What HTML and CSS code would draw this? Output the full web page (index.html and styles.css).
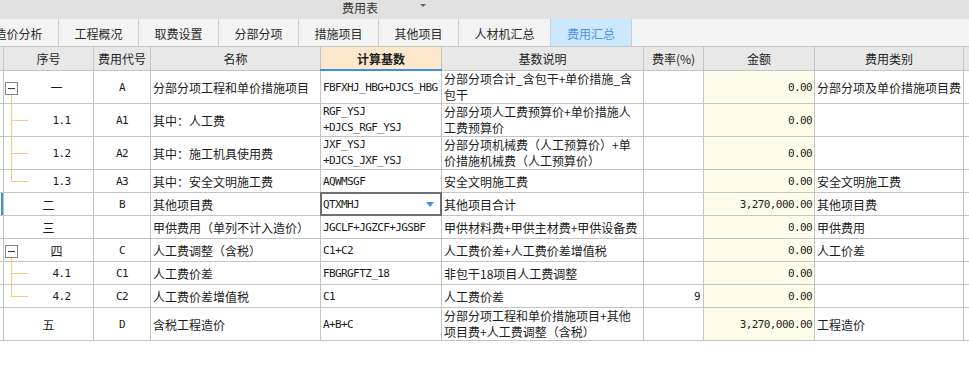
FILE: index.html
```html
<!DOCTYPE html>
<html lang="zh-CN">
<head>
<meta charset="utf-8">
<title>费用表</title>
<link rel="stylesheet" href="styles.css">
</head>
<body>
<div class="titlebar"><span class="title">费用表</span><span class="caret"></span></div>
<div class="tabs">
  <div class="tab first">造价分析</div>
  <div class="tab">工程概况</div>
  <div class="tab">取费设置</div>
  <div class="tab">分部分项</div>
  <div class="tab">措施项目</div>
  <div class="tab">其他项目</div>
  <div class="tab wide">人材机汇总</div>
  <div class="tab active">费用汇总</div>
</div>
<div class="grid">
  <div class="row head">
    <div class="c c0"></div>
    <div class="c c1">序号</div>
    <div class="c c2">费用代号</div>
    <div class="c c3">名称</div>
    <div class="c c4 hcalc">计算基数</div>
    <div class="c c5">基数说明</div>
    <div class="c c6">费率(%)</div>
    <div class="c c7">金额</div>
    <div class="c c8">费用类别</div>
    <div class="c c9"></div>
  </div>

  <div class="row h2">
    <div class="c c0"></div>
    <div class="c c1 t0"><span class="tree-box"></span><span class="vl root"></span>一</div>
    <div class="c c2 m">A</div>
    <div class="c c3">分部分项工程和单价措施项目</div>
    <div class="c c4 m">FBFXHJ_HBG+DJCS_HBG</div>
    <div class="c c5 two">分部分项合计_含包干+单价措施_含<br>包干</div>
    <div class="c c6 m"></div>
    <div class="c c7 m">0.00</div>
    <div class="c c8">分部分项及单价措施项目费</div>
    <div class="c c9"></div>
  </div>

  <div class="row h2">
    <div class="c c0"></div>
    <div class="c c1 t1 m"><span class="vl mid"></span><span class="hl"></span>1.1</div>
    <div class="c c2 m">A1</div>
    <div class="c c3">其中：人工费</div>
    <div class="c c4 m two">RGF_YSJ<br>+DJCS_RGF_YSJ</div>
    <div class="c c5 two">分部分项人工费预算价+单价措施人<br>工费预算价</div>
    <div class="c c6 m"></div>
    <div class="c c7 m">0.00</div>
    <div class="c c8"></div>
    <div class="c c9"></div>
  </div>

  <div class="row h2">
    <div class="c c0"></div>
    <div class="c c1 t1 m"><span class="vl mid"></span><span class="hl"></span>1.2</div>
    <div class="c c2 m">A2</div>
    <div class="c c3">其中：施工机具使用费</div>
    <div class="c c4 m two">JXF_YSJ<br>+DJCS_JXF_YSJ</div>
    <div class="c c5 two">分部分项机械费（人工预算价）+单<br>价措施机械费（人工预算价）</div>
    <div class="c c6 m"></div>
    <div class="c c7 m">0.00</div>
    <div class="c c8"></div>
    <div class="c c9"></div>
  </div>

  <div class="row h1">
    <div class="c c0"></div>
    <div class="c c1 t1 m"><span class="vl last"></span><span class="hl"></span>1.3</div>
    <div class="c c2 m">A3</div>
    <div class="c c3">其中：安全文明施工费</div>
    <div class="c c4 m">AQWMSGF</div>
    <div class="c c5">安全文明施工费</div>
    <div class="c c6 m"></div>
    <div class="c c7 m">0.00</div>
    <div class="c c8">安全文明施工费</div>
    <div class="c c9"></div>
  </div>

  <div class="row h1 current">
    <div class="c c0"></div>
    <div class="c c1">二</div>
    <div class="c c2 m">B</div>
    <div class="c c3">其他项目费</div>
    <div class="c c4 m sel">QTXMHJ<span class="dd"></span></div>
    <div class="c c5">其他项目合计</div>
    <div class="c c6 m"></div>
    <div class="c c7 m">3,270,000.00</div>
    <div class="c c8">其他项目费</div>
    <div class="c c9"></div>
  </div>

  <div class="row h1">
    <div class="c c0"></div>
    <div class="c c1">三</div>
    <div class="c c2 m"></div>
    <div class="c c3">甲供费用（单列不计入造价）</div>
    <div class="c c4 m">JGCLF+JGZCF+JGSBF</div>
    <div class="c c5">甲供材料费+甲供主材费+甲供设备费</div>
    <div class="c c6 m"></div>
    <div class="c c7 m">0.00</div>
    <div class="c c8">甲供费用</div>
    <div class="c c9"></div>
  </div>

  <div class="row h1">
    <div class="c c0"></div>
    <div class="c c1 t0"><span class="tree-box"></span><span class="vl root"></span>四</div>
    <div class="c c2 m">C</div>
    <div class="c c3">人工费调整（含税）</div>
    <div class="c c4 m">C1+C2</div>
    <div class="c c5">人工费价差+人工费价差增值税</div>
    <div class="c c6 m"></div>
    <div class="c c7 m">0.00</div>
    <div class="c c8">人工价差</div>
    <div class="c c9"></div>
  </div>

  <div class="row h1">
    <div class="c c0"></div>
    <div class="c c1 t1 m"><span class="vl mid"></span><span class="hl"></span>4.1</div>
    <div class="c c2 m">C1</div>
    <div class="c c3">人工费价差</div>
    <div class="c c4 m">FBGRGFTZ_18</div>
    <div class="c c5">非包干18项目人工费调整</div>
    <div class="c c6 m"></div>
    <div class="c c7 m">0.00</div>
    <div class="c c8"></div>
    <div class="c c9"></div>
  </div>

  <div class="row h1">
    <div class="c c0"></div>
    <div class="c c1 t1 m"><span class="vl last"></span><span class="hl"></span>4.2</div>
    <div class="c c2 m">C2</div>
    <div class="c c3">人工费价差增值税</div>
    <div class="c c4 m">C1</div>
    <div class="c c5">人工费价差</div>
    <div class="c c6 m">9</div>
    <div class="c c7 m">0.00</div>
    <div class="c c8"></div>
    <div class="c c9"></div>
  </div>

  <div class="row h2">
    <div class="c c0"></div>
    <div class="c c1">五</div>
    <div class="c c2 m">D</div>
    <div class="c c3">含税工程造价</div>
    <div class="c c4 m">A+B+C</div>
    <div class="c c5 two">分部分项工程和单价措施项目+其他<br>项目费+人工费调整（含税）</div>
    <div class="c c6 m"></div>
    <div class="c c7 m">3,270,000.00</div>
    <div class="c c8">工程造价</div>
    <div class="c c9"></div>
  </div>
</div>
</body>
</html>
```

FILE: styles.css
```css
* { box-sizing: border-box; margin: 0; padding: 0; }

body {
  margin: 0;
  width: 969px;
  height: 385px;
  overflow: hidden;
  background: #ffffff;
  font-family: "Noto Sans CJK SC", "Noto Sans", sans-serif;
  font-size: 12px;
  color: #1c1c1c;
}

/* title bar */
.titlebar {
  height: 19px;
  background: #e1e1e1;
  display: flex;
  align-items: flex-start;
  padding-left: 342px;
}
.title {
  font-size: 12px;
  line-height: 15px;
  color: #333333;
}
.caret {
  width: 0;
  height: 0;
  margin-left: 42px;
  margin-top: 4px;
  border-left: 3px solid transparent;
  border-right: 3px solid transparent;
  border-top: 3px solid #666666;
}

/* tabs */
.tabs {
  height: 28px;
  display: flex;
  background: #f3f3f3;
  border-bottom: 1px solid #c6c6c6;
  overflow: hidden;
}
.tab {
  flex: none;
  width: 80px;
  padding-top: 3px;
  line-height: 23px;
  text-align: center;
  color: #2a2a2a;
  border-right: 1px solid #cdcdcd;
  white-space: nowrap;
}
.tab.first { margin-left: -21px; }
.tab.wide { width: 92px; }
.tab.active {
  width: 81px;
  background: #cce8ff;
  color: #4d94e6;
}

/* grid */
.row {
  display: flex;
  border-bottom: 1px solid #c4c4c4;
}
.head {
  height: 24px;
  background: #e8e8e8;
}
.h1 { height: 23px; }
.h2 { height: 33px; }

.c {
  flex: none;
  position: relative;
  display: flex;
  align-items: center;
  padding: 0 2px;
  white-space: nowrap;
  border-right: 1px solid #c4c4c4;
}
.c0 { width: 4px; padding: 0; }
.c1 { width: 90px; justify-content: center; }
.c2 { width: 57px; justify-content: center; }
.c3 { width: 170px; }
.c4 { width: 121px; }
.c5 { width: 202px; }
.c6 { width: 60px; justify-content: flex-end; padding-right: 3px; }
.c7 { width: 111px; justify-content: flex-end; padding-right: 2px; background: #fffde9; }
.c8 { width: 149px; }
.c9 { flex: 1; border-right: none; }

.head .c { justify-content: center; color: #222222; }
.head .c7 { background: transparent; }
.head .c6 { padding-right: 2px; }
.hcalc {
  background: #fde8cb;
  font-weight: bold;
}
.hcalc::after {
  content: "";
  position: absolute;
  left: -1px;
  right: -1px;
  bottom: -1px;
  height: 2px;
  background: #3d8fe6;
}

.m {
  font-family: "DejaVu Sans Mono", "Liberation Mono", monospace;
  font-size: 11px;
  letter-spacing: -0.6px;
}
.two { line-height: 16px; }

/* tree */
.t0 { padding-left: 18px; }
.t1 { padding-left: 28px; }
.tree-box {
  position: absolute;
  left: 1px;
  top: 50%;
  margin-top: -5px;
  width: 13px;
  height: 13px;
  border: 1px solid #858585;
  background: #ffffff;
}
.tree-box::after {
  content: "";
  position: absolute;
  left: 2px;
  right: 2px;
  top: 5px;
  height: 1px;
  background: #333333;
}
.vl {
  position: absolute;
  left: 7px;
  width: 1px;
  background: #fbc97e;
}
.vl.root { top: calc(50% + 8px); bottom: -1px; }
.vl.mid { top: 0; bottom: -1px; }
.vl.last { top: 0; height: 50%; }
.hl {
  position: absolute;
  left: 7px;
  top: 50%;
  width: 17px;
  height: 1px;
  background: #fbc97e;
}

/* current row + selected cell */
.current .c0 {
  background: linear-gradient(90deg, #ffffff 1px, #3b8fe8 1px, #3b8fe8 3px, #ffffff 3px);
}
.sel::after {
  content: "";
  position: absolute;
  left: -1px;
  top: -1px;
  right: -1px;
  bottom: -1px;
  border: 2px solid #6f6f6f;
}
.dd {
  position: absolute;
  right: 7px;
  top: 50%;
  margin-top: -2px;
  width: 0;
  height: 0;
  border-left: 4px solid transparent;
  border-right: 4px solid transparent;
  border-top: 5px solid #4a8fd6;
}
```
